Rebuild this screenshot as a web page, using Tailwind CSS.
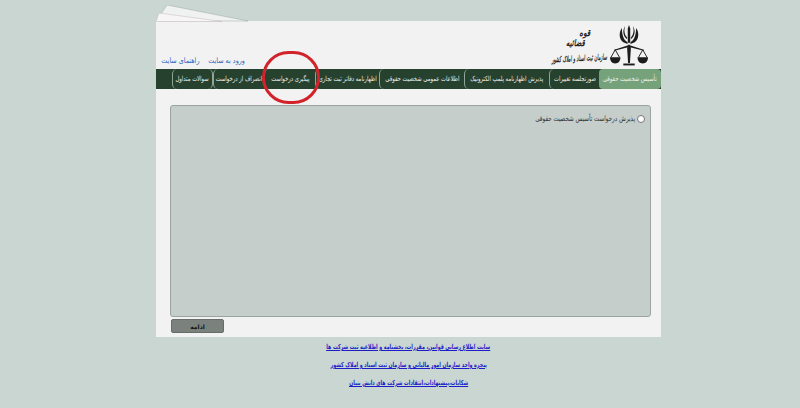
<!DOCTYPE html>
<html lang="fa" dir="rtl">
<head>
    <meta charset="UTF-8">
    <title>ثبت شرکت ها</title>
    <script src="https://cdn.jsdelivr.net/npm/@tailwindcss/browser@4"></script>
</head>
<body class="bg-[#c9d6d1] font-['DejaVu_Sans',sans-serif] h-[408px] overflow-hidden pt-[21px]">
    <div class="relative w-[505px] ml-[156px] mr-[139px] h-[316px] bg-[#f2f2f2] flex flex-col">
        <!-- paper edges -->
        <svg class="absolute top-[-16px] left-0" width="100" height="17" viewBox="0 0 100 17">
            <polygon points="11,0 92,16 2,16 5,9" fill="#f0f2f1" stroke="#9ea8a3" stroke-width="0.5"/>
            <polygon points="3,8 66,16.500 0,16.500" fill="#f6f6f6" stroke="#c4b8b8" stroke-width="0.5"/>
        </svg>

        <!-- header -->
        <div class="h-[48px] flex items-start justify-between shrink-0">
            <div class="flex pr-[13px] pt-[2px]">
                <svg width="38" height="44" viewBox="0 0 40 44" class="shrink-0">
                    <g fill="#1c1c1c">
                        <path d="M20 1l1.300 3.500v15h-2.600v-15z"/>
                        <path d="M16 2c-1.500 4-1 9 2 12v2c-4-3-5.500-9-2-14zM24 2c1.500 4 1 9-2 12v2c4-3 5.500-9 2-14z"/>
                        <path d="M12.500 4c-3.500 5-3 12 1.500 15l4.500 2v-2c-4-2-6-8-6-15zM27.500 4c3.500 5 3 12-1.500 15l-4.500 2v-2c4-2 6-8 6-15z"/>
                        <path d="M20 21l2 4-1 16h-2l-1-16z"/>
                        <path d="M4.500 27l15.500-5 15.500 5v1l-15.500-4-15.500 4z"/>
                        <path d="M0 35h11c0 4-2 6.500-5.500 6.500S0 39 0 35zM29 35h11c0 4-2 6.500-5.500 6.500S29 39 29 35z"/>
                        <path d="M14 41.500h12V43.500H14z"/>
                    </g>
                    <path d="M5.500 27L1 35M5.500 27L10 35M34.500 27L30 35M34.500 27L39 35" stroke="#1c1c1c" stroke-width="1" fill="none"/>
                </svg>
                <div class="flex flex-col items-center w-[62px] pt-[6px] text-[#222] italic font-bold whitespace-nowrap">
                    <span class="text-[9px] leading-[9px] scale-x-[0.8] translate-x-[6px]">قوه</span>
                    <span class="text-[9px] leading-[10px] scale-x-[0.75] translate-x-[-4px]">قضائیه</span>
                    <span class="mt-[6px] text-[8px] leading-[10px] scale-x-[0.5] -rotate-3">سازمان ثبت اسناد و املاک کشور</span>
                </div>
            </div>
            <div class="self-end flex gap-[5px] pl-[2px] pb-[3px] text-[7.500px] leading-[10px] text-[#2a5fc0] whitespace-nowrap">
                <span class="w-[40px] text-center"><span class="inline-block scale-x-[0.85]">ورود به سایت</span></span>
                <span class="w-[45px] text-center"><span class="inline-block scale-x-[0.85]">راهنمای سایت</span></span>
            </div>
        </div>

        <!-- nav -->
        <nav class="h-[20px] bg-[#27412f] flex items-stretch text-[7px] text-[#eef2ee] whitespace-nowrap shrink-0">
            <a class="w-[62px] flex items-center justify-center bg-[#76a27b] rounded-[4px]"><span class="scale-x-[0.75]">تأسیس شخصیت حقوقی</span></a>
            <a class="w-[50px] ml-px flex items-center justify-center border-l border-[#8fa596] rounded-l-[5px]"><span class="scale-x-[0.75]">صورتجلسه تغییرات</span></a>
            <a class="w-[84px] flex items-center justify-center border-l border-[#8fa596] rounded-l-[5px]"><span class="scale-x-[0.75]">پذیرش اظهارنامه پلمپ الکترونیک</span></a>
            <a class="w-[85px] flex items-center justify-center border-l border-[#8fa596] rounded-l-[5px]"><span class="scale-x-[0.75]">اطلاعات عمومی شخصیت حقوقی</span></a>
            <a class="w-[64px] flex items-center justify-center border-l border-[#8fa596] rounded-l-[5px]"><span class="scale-x-[0.75]">اظهارنامه دفاتر ثبت تجاری</span></a>
            <a class="w-[51px] flex items-center justify-center border-l border-[#8fa596] rounded-l-[5px]"><span class="scale-x-[0.75]">پیگیری درخواست</span></a>
            <a class="w-[51px] flex items-center justify-center border-l border-[#8fa596] rounded-l-[5px]"><span class="scale-x-[0.75]">انصراف از درخواست</span></a>
            <a class="w-[41px] flex items-center justify-center border-x border-[#8fa596] rounded-[5px]"><span class="scale-x-[0.75]">سوالات متداول</span></a>
        </nav>

        <!-- main panel -->
        <div class="mt-[16px] ml-[14px] mr-[10px] h-[212px] bg-[#c5ceca] border border-[#9aa5a0] rounded-[3px] pt-[8px] pr-[5px] shrink-0">
            <label class="flex items-center gap-[2px] text-[7.500px] leading-[10px] text-[#333]">
                <span class="w-[8px] h-[8px] rounded-full bg-white border border-[#777] shrink-0"></span>
                <span class="scale-x-[0.745] origin-right">پذیرش درخواست تأسیس شخصیت حقوقی</span>
            </label>
        </div>

        <div class="mt-[2px] flex justify-end pl-[15px]">
            <button class="w-[53px] h-[14px] bg-[#7b827e] border border-[#666d69] rounded-[2px] text-[6px] font-bold text-[#111]">ادامه</button>
        </div>

        <!-- highlight circle -->
        <div class="absolute left-[106px] top-[30px] w-[58px] h-[53px] rounded-full border-[3px] border-[#d3232a]"></div>
    </div>

    <!-- footer links -->
    <div class="w-[505px] ml-[156px] mr-[139px] mt-[5px] flex flex-col items-center gap-[8px] text-[7px] leading-[10px] font-bold text-[#1c1cc8] underline whitespace-nowrap">
        <a class="scale-x-[0.67]">سایت اطلاع رسانی قوانین، مقررات، بخشنامه و اطلاعیه ثبت شرکت ها</a>
        <a class="scale-x-[0.67]">پنجره واحد سازمان امور مالیاتی و سازمان ثبت اسناد و املاک کشور</a>
        <a class="scale-x-[0.67]">شکایات،پیشنهادات،انتقادات شرکت های دانش بنیان</a>
    </div>
</body>
</html>
